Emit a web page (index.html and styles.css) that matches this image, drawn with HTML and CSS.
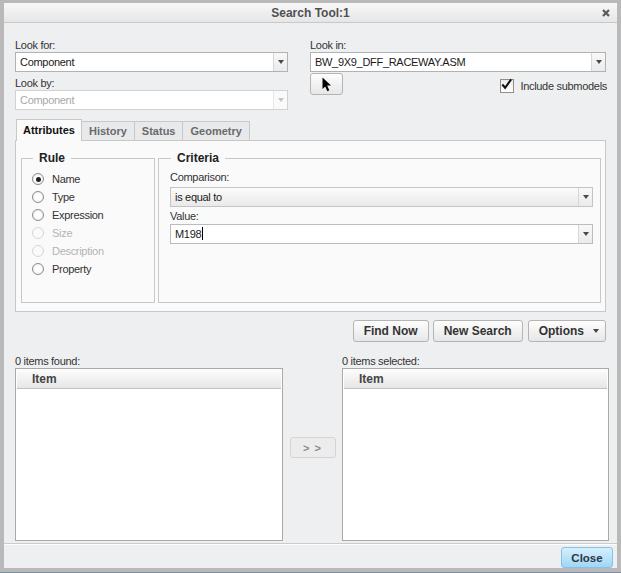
FILE: index.html
```html
<!DOCTYPE html>
<html lang="en">
<head>
  <meta charset="UTF-8" />
  <title>Search Tool:1</title>
  <link rel="stylesheet" href="styles.css">
</head>
<body>
  <div class="window">
    <div class="titlebar">
      <span></span>
      <span class="title">Search Tool:1</span>
      <svg class="close-x" width="8" height="8" viewBox="0 0 8 8"><path d="M1 1 L7 7 M7 1 L1 7" stroke="#5a5a5a" stroke-width="2.2"/></svg>
    </div>

    <div class="main">
      <div class="look-grid">
        <div class="look-col">
          <span class="field-label">Look for:</span>
          <div class="combo"><span class="val">Component</span><span class="drop"></span></div>
          <span class="field-label gap">Look by:</span>
          <div class="combo disabled"><span class="val">Component</span><span class="drop"></span></div>
        </div>
        <div class="look-col">
          <span class="field-label">Look in:</span>
          <div class="combo"><span class="val">BW_9X9_DFF_RACEWAY.ASM</span><span class="drop"></span></div>
          <div class="pick-row">
            <button class="btn pick">
              <svg width="10" height="15" viewBox="0 0 10 15"><path d="M0.5 0.5 L0.5 12 L3.2 9.4 L5.4 14.2 L7.3 13.3 L5.1 8.6 L9 8.6 Z" fill="#000"/></svg>
            </button>
            <label class="check">
              <span class="box"><svg width="14" height="14" viewBox="0 0 14 14"><path d="M2.5 6.5 L5.5 10 L12 1" fill="none" stroke="#111" stroke-width="2.2"/></svg></span>
              Include submodels
            </label>
          </div>
        </div>
      </div>

      <div class="tabs">
        <span class="tab active">Attributes</span>
        <span class="tab">History</span>
        <span class="tab">Status</span>
        <span class="tab">Geometry</span>
      </div>

      <div class="tab-panel">
        <fieldset class="group rule">
          <legend>Rule</legend>
          <div class="radio-row"><span class="radio checked"></span>Name</div>
          <div class="radio-row"><span class="radio"></span>Type</div>
          <div class="radio-row"><span class="radio"></span>Expression</div>
          <div class="radio-row off"><span class="radio"></span>Size</div>
          <div class="radio-row off"><span class="radio"></span>Description</div>
          <div class="radio-row"><span class="radio"></span>Property</div>
        </fieldset>
        <fieldset class="group criteria">
          <legend>Criteria</legend>
          <span class="field-label crit-label">Comparison:</span>
          <div class="combo shaded"><span class="val">is equal to</span><span class="drop"></span></div>
          <span class="field-label crit-label second">Value:</span>
          <div class="combo value"><span class="val">M198<span class="caret"></span></span><span class="drop"></span></div>
        </fieldset>
      </div>

      <div class="actions">
        <button class="btn action">Find Now</button>
        <button class="btn action">New Search</button>
        <button class="btn action options">Options<span class="small-arrow"></span></button>
      </div>

      <div class="results">
        <span class="field-label">0 items found:</span>
        <span></span>
        <span class="field-label">0 items selected:</span>
        <div class="list"><div class="list-head">Item</div></div>
        <div class="mover"><button class="btn move">&gt; &gt;</button></div>
        <div class="list"><div class="list-head">Item</div></div>
      </div>
    </div>

    <div class="footer">
      <button class="close-btn">Close</button>
    </div>
  </div>
</body>
</html>
```

FILE: styles.css
```css
* {
  margin: 0;
  padding: 0;
  box-sizing: border-box;
}

body {
  width: 621px;
  height: 573px;
  overflow: hidden;
  background: #7d8ea3;
  font-family: "Liberation Sans", Arial, sans-serif;
  font-size: 11px;
  letter-spacing: -0.3px;
  color: #222;
}

.window {
  width: 621px;
  height: 572px;
  display: flex;
  flex-direction: column;
  background: #eeeff1;
  border: 4px solid #b9b9b9;
  border-top-width: 3px;
}

/* title bar */
.titlebar {
  height: 20px;
  display: grid;
  grid-template-columns: 1fr auto 1fr;
  align-items: center;
  background: linear-gradient(#f8f8f8, #e6e6e6);
  border-bottom: 1px solid #c8c8c8;
}

.title {
  font-size: 12px;
  font-weight: bold;
  letter-spacing: 0;
  color: #505050;
}

.close-x {
  justify-self: end;
  margin-right: 7px;
}

.main {
  flex: 1;
  padding: 15px 11px 0 11px;
}

/* look for / look in */
.look-grid {
  display: grid;
  grid-template-columns: 273px 296px;
  column-gap: 22px;
  align-items: start;
}

.field-label {
  display: block;
  height: 14px;
  line-height: 14px;
  color: #333;
}

.field-label.gap {
  margin-top: 4px;
}

.combo {
  display: flex;
  height: 20px;
  background: #fff;
  border: 1px solid #b2b2b2;
}

.combo .val {
  flex: 1;
  padding-left: 4px;
  line-height: 18px;
  color: #1a1a1a;
  white-space: nowrap;
}

.combo .drop {
  width: 14px;
  display: flex;
  align-items: center;
  justify-content: center;
  border-left: 1px solid #d6d6d6;
  background: linear-gradient(#f8f8f8, #ebebeb);
}

.combo .drop::after {
  content: "";
  border-left: 3.5px solid transparent;
  border-right: 3.5px solid transparent;
  border-top: 4px solid #4a4a4a;
}

.combo.disabled {
  border-color: #d2d2d2;
}

.combo.disabled .val {
  color: #a8a8a8;
}

.combo.disabled .drop {
  border-left-color: #e6e6e6;
  background: #fafafa;
}

.combo.disabled .drop::after {
  border-top-color: #c4c4c4;
}

.pick-row {
  display: flex;
  justify-content: space-between;
  align-items: flex-start;
  margin-top: 1px;
}

.btn {
  font-family: inherit;
  background: linear-gradient(#fdfdfd, #e7e7e7);
  border: 1px solid #b4b4b4;
  border-radius: 3px;
  color: #333;
}

.pick {
  width: 33px;
  height: 22px;
  display: flex;
  align-items: center;
  justify-content: center;
}

.check {
  display: flex;
  align-items: center;
  gap: 6px;
  margin-top: 6px;
  margin-right: -1px;
  color: #333;
}

.box {
  width: 14px;
  height: 14px;
  border: 1px solid #8d8d8d;
  background: linear-gradient(#ececec, #fff);
  display: flex;
}

.box svg {
  margin: -2px 0 0 -1px;
}

/* tabs */
.tabs {
  display: flex;
  align-items: flex-end;
  height: 21px;
  margin-top: 9px;
  padding-left: 1px;
}

.tab {
  height: 19px;
  line-height: 18px;
  padding: 0 7px;
  font-weight: bold;
  letter-spacing: 0;
  color: #6a6a6a;
  background: #e8e9ea;
  border: 1px solid #c8c8c8;
  border-bottom: none;
  margin-left: -1px;
}

.tab:first-child {
  margin-left: 0;
}

.tab.active {
  height: 22px;
  line-height: 20px;
  padding: 0 6px;
  margin-bottom: -1px;
  color: #111;
  background: #fafafa;
  position: relative;
  z-index: 1;
}

.tab-panel {
  display: flex;
  gap: 3px;
  padding: 10px 4px 8px 5px;
  background: #fafafa;
  border: 1px solid #c8c8c8;
}

.group {
  height: 152px;
  border: 1px solid #c8c8c8;
  min-width: 0;
}

.group legend {
  font-size: 12px;
  font-weight: bold;
  letter-spacing: 0;
  line-height: 14px;
  padding: 0 6px;
  margin-left: 1px;
  color: #222;
}

.rule {
  width: 134px;
  padding: 5px 10px 0 10px;
}

.criteria {
  flex: 1;
  padding: 5px 7px 0 11px;
}

.radio-row {
  display: flex;
  align-items: center;
  gap: 8px;
  height: 18px;
  color: #333;
}

.radio {
  width: 12px;
  height: 12px;
  border-radius: 50%;
  border: 1px solid #8c8c8c;
  background: radial-gradient(#fff 40%, #e4e4e4);
  display: flex;
  align-items: center;
  justify-content: center;
}

.radio.checked::after {
  content: "";
  width: 5px;
  height: 5px;
  border-radius: 50%;
  background: #222;
}

.radio-row.off {
  color: #b4b4b4;
}

.radio-row.off .radio {
  border-color: #d6d6d6;
  background: #fafafa;
}

.crit-label {
  margin-bottom: 3px;
}

.crit-label.second {
  margin-top: 2px;
  margin-bottom: 1px;
}

.combo.shaded {
  border-color: #c4c4c4;
  background: linear-gradient(#fbfbfb, #e9e9e9);
}

.combo.shaded .drop {
  border-left-color: #d6d6d6;
}

.combo.value {
  border-color: #bcbcbc;
}

.caret {
  display: inline-block;
  width: 1px;
  height: 13px;
  margin-left: 1px;
  vertical-align: -2px;
  background: #000;
}

/* action buttons */
.actions {
  display: flex;
  justify-content: flex-end;
  gap: 4px;
  margin-top: 8px;
}

.action {
  height: 22px;
  padding: 0 10px;
  font-size: 12px;
  font-weight: bold;
  letter-spacing: 0;
  color: #333;
}

.options {
  display: flex;
  align-items: center;
  gap: 9px;
  padding: 0 6px 0 10px;
  margin-left: 1px;
}

.small-arrow {
  border-left: 3.5px solid transparent;
  border-right: 3.5px solid transparent;
  border-top: 4px solid #444;
}

/* results */
.results {
  display: grid;
  grid-template-columns: 268px 59px 267px;
  grid-template-rows: 14px 173px;
  margin-top: 12px;
  margin-right: -3px;
}

.list {
  background: #fff;
  border: 1px solid #a9a9a9;
  padding: 0 1px;
}

.list-head {
  height: 20px;
  line-height: 21px;
  padding-left: 15px;
  font-size: 12px;
  font-weight: bold;
  letter-spacing: 0;
  color: #444;
  background: linear-gradient(#fdfdfd, #e6e6e6);
  border-bottom: 1px solid #c2c2c2;
}

.mover {
  display: flex;
  justify-content: center;
  padding-top: 69px;
}

.move {
  width: 46px;
  height: 21px;
  color: #8a8a8a;
  font-size: 11px;
  font-weight: bold;
  letter-spacing: 1px;
  background: #ececed;
  border-color: #d4d4d4;
}

/* footer */
.footer {
  display: flex;
  justify-content: flex-end;
  padding: 3px 4px 0 0;
  border-top: 1px solid #cbcbcb;
  box-shadow: inset 0 1px #fdfdfd;
}

.close-btn {
  width: 52px;
  height: 21px;
  font-family: inherit;
  font-size: 11.5px;
  font-weight: bold;
  letter-spacing: 0;
  color: #2b3642;
  background: linear-gradient(#d6effd, #a0d6f6);
  border: 1px solid #86c2e6;
  border-radius: 3px;
}
```
